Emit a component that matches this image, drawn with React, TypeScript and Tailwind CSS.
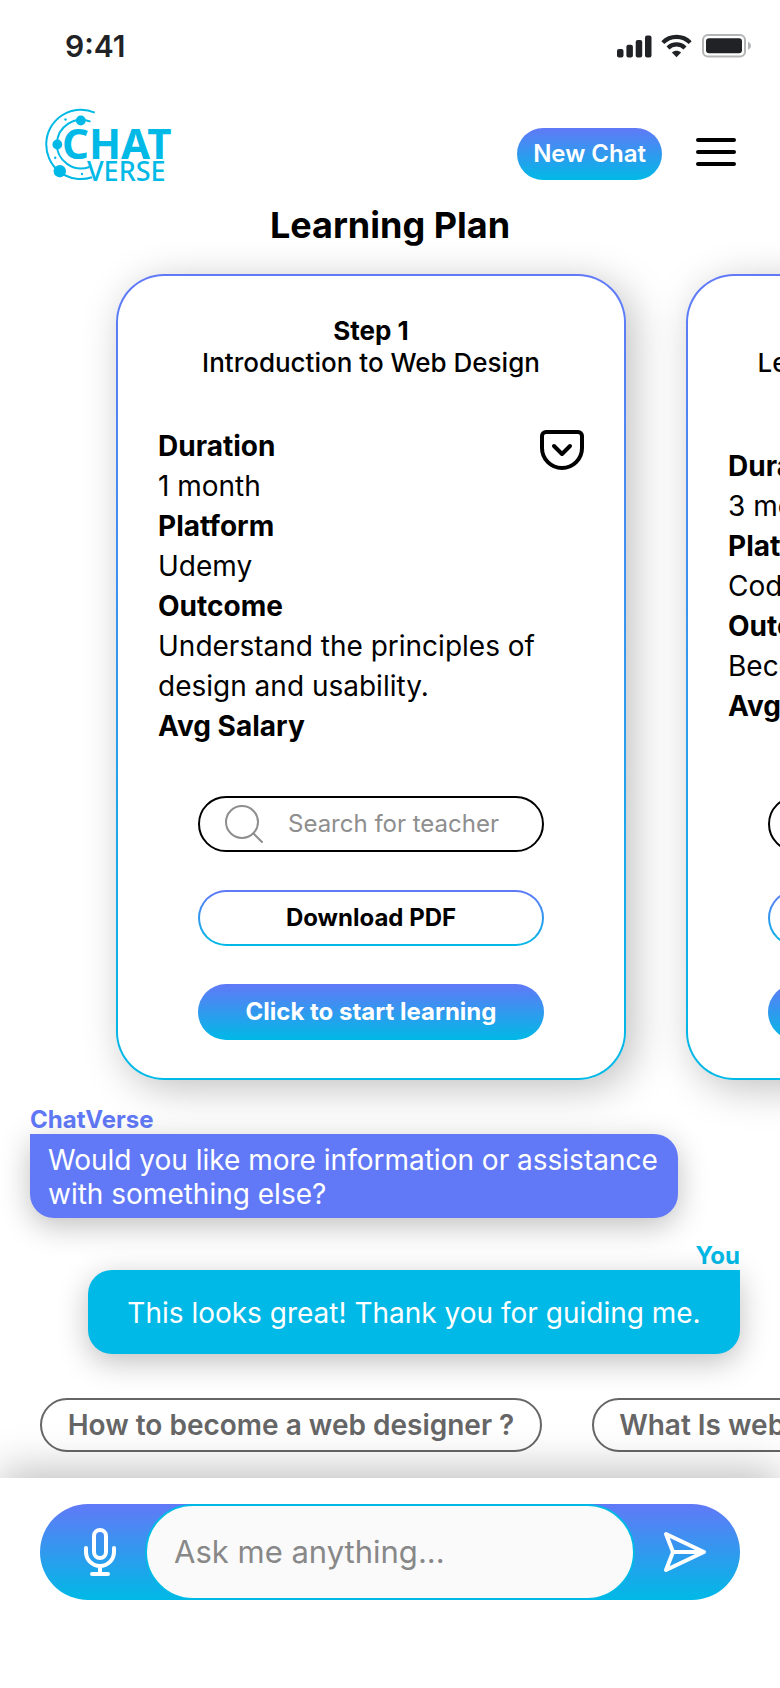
import React from "react";

type Fact = { label: string; value?: string };

type Step = {
  id: string;
  step: string;
  title: string;
  facts: Fact[];
};

const steps: Step[] = [
  {
    id: "step-1",
    step: "Step 1",
    title: "Introduction to Web Design",
    facts: [
      { label: "Duration", value: "1 month" },
      { label: "Platform", value: "Udemy" },
      { label: "Outcome", value: "Understand the principles of design and usability." },
      { label: "Avg Salary" },
    ],
  },
  {
    id: "step-2",
    step: "Step 2",
    title: "Learn HTML, CSS, JavaScript",
    facts: [
      { label: "Duration", value: "3 months" },
      { label: "Platform", value: "Codecademy" },
      { label: "Outcome", value: "Become a web developer." },
      { label: "Avg Salary" },
    ],
  },
];

const suggestions = ["How to become a web designer ?", "What Is web designing used for ?"];

function StatusBar() {
  return (
    <div className="flex h-[92px] items-center justify-between pl-[65px] pr-7 text-[#202226]">
      <time className="text-[30px] font-semibold leading-9">9:41</time>
      <svg viewBox="0 0 136 26" className="h-[26px] w-[136px]" fill="currentColor" aria-hidden="true">
        <rect x="1" y="16" width="6.5" height="8.5" rx="2" />
        <rect x="10.4" y="11.8" width="6.5" height="12.7" rx="2" />
        <rect x="19.7" y="7" width="6.5" height="17.5" rx="2" />
        <rect x="29" y="2.5" width="6.5" height="22" rx="2" />
        <g fill="none" stroke="currentColor" strokeWidth="4.2">
          <path d="M46.8 9.6a19.2 19.2 0 0 1 27.4 0" />
          <path d="M52 14.9a12 12 0 0 1 17 0" />
        </g>
        <path d="M60.5 24.2l-4.6-4.8c2.6-2.3 6.6-2.3 9.2 0z" />
        <rect x="87" y="2" width="42" height="21.5" rx="5" fill="none" stroke="#b4b5b7" strokeWidth="2" />
        <rect x="90" y="5.3" width="36" height="15" rx="3" />
        <path d="M132 8.8c1.8.8 3 2.3 3 4s-1.2 3.2-3 4z" fill="#b4b5b7" />
      </svg>
    </div>
  );
}

function Logo() {
  return (
    <svg viewBox="45 108 130 74" className="h-[74px] w-[130px] text-[#00b9e6]" fill="currentColor" role="img" aria-label="ChatVerse">
      <g fill="none" stroke="currentColor" strokeWidth="2">
        <path d="M94.8 112.6A34.7 34.7 0 1 0 92 177.3" />
        <path d="M90.5 121.7A24.3 24.3 0 1 0 89.5 167" />
      </g>
      <circle cx="80.8" cy="120.5" r="4.9" />
      <circle cx="57.3" cy="144.5" r="4.9" />
      <circle cx="59.8" cy="171.2" r="6.2" />
      <circle cx="65.5" cy="119.5" r="1.2" />
      <circle cx="55.2" cy="157.7" r="1.2" />
      <circle cx="82" cy="174" r="1.2" />
      <text x="62" y="158.5" fontSize="42" fontWeight="700" fontFamily="'Noto Sans', 'Open Sans', sans-serif">CHAT</text>
      <text x="87" y="180.7" fontSize="27" fontWeight="500" fontFamily="'Noto Sans', 'Open Sans', sans-serif">VERSE</text>
    </svg>
  );
}

function StepCard({ id, step, title, facts }: Step) {
  return (
    <article className="flex w-[510px] shrink-0 flex-col rounded-[48px] border-2 border-transparent px-10 pb-[38px] pt-[39px] shadow-[8px_8px_40px_rgba(0,0,0,0.25)] [background:linear-gradient(#fff,#fff)_padding-box,linear-gradient(#6179f7,#00b9e6)_border-box]">
      <header className="text-center text-[26px] leading-8">
        <h2 className="font-bold">{step}</h2>
        <p className="font-medium">{title}</p>
      </header>
      <div className="mb-[50px] mt-[47px] flex min-h-[320px] items-center">
        <div className="relative w-full">
          <dl className="text-[28px] leading-10">
            {facts.map((f) => (
              <React.Fragment key={f.label}>
                <dt className="font-bold">{f.label}</dt>
                {f.value && <dd>{f.value}</dd>}
              </React.Fragment>
            ))}
          </dl>
          <button type="button" aria-label="Save step" className="absolute right-0 top-1">
            <svg viewBox="0 0 44 40" className="h-10 w-11" fill="none" stroke="currentColor" strokeWidth="4" strokeLinecap="round" strokeLinejoin="round">
              <path d="M6 2h32a4 4 0 0 1 4 4v12a20 20 0 0 1-40 0V6a4 4 0 0 1 4-4z" />
              <path d="M14 16l8 8 8-8" />
            </svg>
          </button>
        </div>
      </div>
      <div className="flex flex-col gap-[38px] px-10 text-2xl">
        <label htmlFor={`${id}-teacher`} className="flex h-14 items-center gap-6 rounded-full border-2 border-black px-6">
          <svg viewBox="0 0 40 40" className="h-10 w-10 shrink-0" fill="none" stroke="#8e8e8e" strokeWidth="2" strokeLinecap="round" aria-hidden="true">
            <circle cx="18" cy="18" r="16" />
            <path d="M29.5 29.5l8.5 8.5" />
          </svg>
          <input
            id={`${id}-teacher`}
            type="text"
            aria-label="Search for teacher"
            placeholder="Search for teacher"
            className="w-full min-w-0 bg-transparent outline-none placeholder:text-[#8e8e8e]"
          />
        </label>
        <button type="button" className="h-14 rounded-full border-2 border-transparent font-bold [background:linear-gradient(#fff,#fff)_padding-box,linear-gradient(#6179f7,#00b9e6)_border-box]">
          Download PDF
        </button>
        <button type="button" className="h-14 rounded-full bg-linear-to-b/srgb from-[#6179f7] to-[#00b9e6] font-bold text-white">
          Click to start learning
        </button>
      </div>
    </article>
  );
}

export default function App() {
  return (
    <div className="flex min-h-screen flex-col overflow-x-clip bg-white text-black" style={{ fontFamily: "Inter, 'Liberation Sans', sans-serif" }}>
      <StatusBar />
      <header className="flex items-end justify-between pl-[45px] pr-11 pt-4">
        <Logo />
        <div className="mb-0.5 flex items-center gap-[34px]">
          <button type="button" className="h-[52px] rounded-full bg-linear-to-b/srgb from-[#6179f7] to-[#00b9e6] px-4 text-2xl font-semibold text-white">
            New Chat
          </button>
          <button type="button" aria-label="Menu">
            <svg viewBox="0 0 40 28" className="mb-1 h-7 w-10" stroke="currentColor" strokeWidth="4" strokeLinecap="round">
              <path d="M2 2h36M2 14h36M2 26h36" />
            </svg>
          </button>
        </div>
      </header>

      <main className="flex flex-1 flex-col">
        <h1 className="relative z-10 mt-5 text-center text-4xl font-bold leading-[46px]">Learning Plan</h1>

        <section aria-label="Plan steps" className="-mb-[54px] -mt-[34px] flex items-start gap-[60px] overflow-x-auto pb-20 pl-[116px] pt-[60px] [scrollbar-width:none]">
          {steps.map((s) => (
            <StepCard key={s.id} {...s} />
          ))}
        </section>

        <section aria-label="Conversation" className="relative flex flex-col gap-6 pl-[30px] pr-10 text-[28px]">
          <div className="flex max-w-[648px] flex-col">
            <span className="text-2xl font-bold leading-7 text-[#6179f7]">ChatVerse</span>
            <p className="flex min-h-[84px] items-center rounded-[24px] rounded-tl-none bg-[#6179f7] px-[18px] pt-0.5 leading-[34px] text-white shadow-[0_8px_30px_rgba(0,0,0,0.25)]">
              Would you like more information or assistance with something else?
            </p>
          </div>
          <div className="flex w-full max-w-[652px] flex-col self-end">
            <span className="text-right text-2xl font-bold leading-7 text-[#00b9e6]">You</span>
            <p className="flex min-h-[84px] items-center justify-center rounded-[24px] rounded-tr-none bg-[#00b9e6] px-[18px] pt-0.5 leading-[34px] text-white shadow-[0_8px_30px_rgba(0,0,0,0.25)]">
              This looks great! Thank you for guiding me.
            </p>
          </div>
        </section>

        <div className="mt-11 flex gap-[50px] overflow-x-auto pb-[26px] pl-10 [scrollbar-width:none]">
          {suggestions.map((s) => (
            <button key={s} type="button" className="h-[54px] w-[502px] shrink-0 whitespace-nowrap rounded-full border-2 border-[#666] text-[28px] font-semibold text-[#666]">
              {s}
            </button>
          ))}
        </div>
      </main>

      <footer className="relative bg-white px-10 pb-[88px] pt-[26px] shadow-[0_-8px_40px_rgba(0,0,0,0.25)]">
        <form className="flex h-24 items-stretch rounded-full bg-linear-to-b/srgb from-[#6179f7] to-[#00b9e6]" onSubmit={(e) => e.preventDefault()}>
          <button type="button" aria-label="Speak" className="flex w-[105px] shrink-0 items-center justify-center pl-3.5 text-white">
            <svg viewBox="0 0 32 48" className="h-12 w-8" fill="none" stroke="currentColor" strokeWidth="4" strokeLinecap="round">
              <rect x="10" y="2" width="12" height="28" rx="6" />
              <path d="M2 20v4a14 14 0 0 0 28 0v-4M16 38v8M8 46h16" />
            </svg>
          </button>
          <input
            type="text"
            aria-label="Message"
            placeholder="Ask me anything..."
            className="min-w-0 flex-1 rounded-full border-2 border-[#00b9e6] bg-[#fafafa] px-[27px] text-[31px] outline-none placeholder:text-[#888]"
          />
          <button type="submit" aria-label="Send" className="flex w-[105px] shrink-0 items-center justify-center pr-1.5 text-white">
            <svg viewBox="0 0 44 44" className="h-11 w-11" fill="none" stroke="currentColor" strokeWidth="4" strokeLinecap="round" strokeLinejoin="round">
              <path d="M3 4l38 18L3 40l7-18zM10 22h31" />
            </svg>
          </button>
        </form>
      </footer>
    </div>
  );
}
